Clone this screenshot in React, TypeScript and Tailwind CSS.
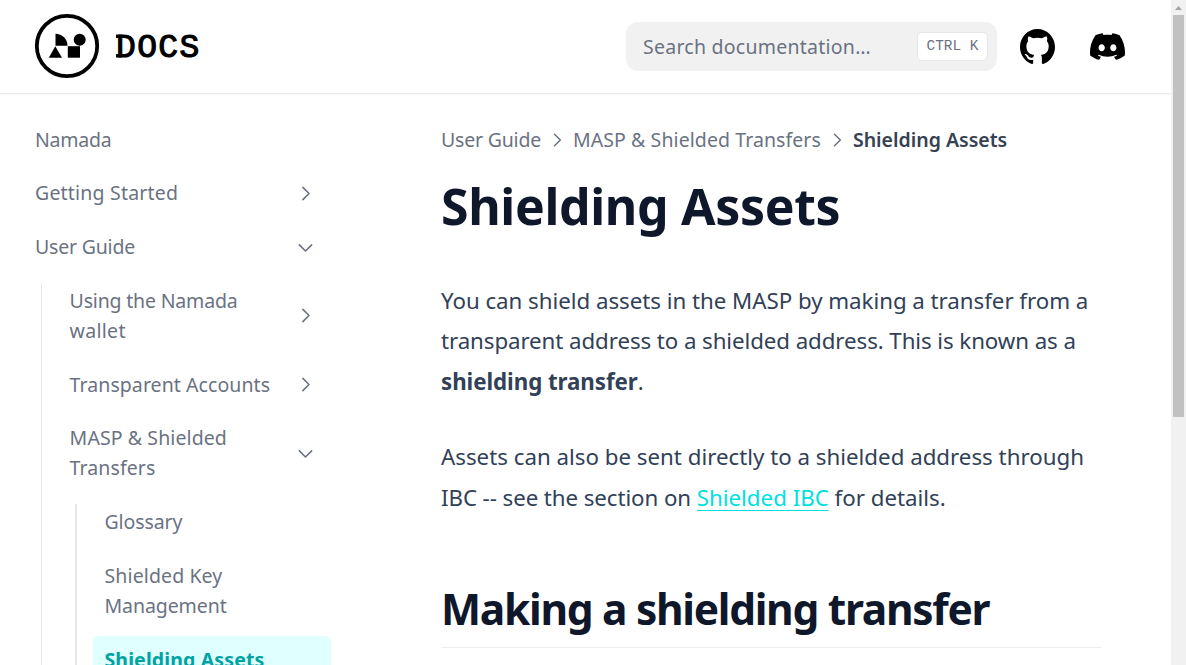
import type { ReactNode } from 'react';
import { SiDiscord } from 'react-icons/si';

function Chevron({ className = '' }: { className?: string }) {
  return (
    <svg viewBox="0 0 24 24" fill="none" stroke="currentColor" strokeWidth="1.8" className={`shrink-0 ${className}`}>
      <path d="M9 5l7 7-7 7" strokeLinecap="round" strokeLinejoin="round" />
    </svg>
  );
}

function GitHubIcon() {
  return (
    <svg viewBox="3 3 18 18" fill="currentColor" className="size-[35px]">
      <path d="M12 3C7.0275 3 3 7.12937 3 12.2276C3 16.3109 5.57625 19.7597 9.15374 20.9824C9.60374 21.0631 9.77249 20.7863 9.77249 20.5441C9.77249 20.3249 9.76125 19.5982 9.76125 18.8254C7.5 19.2522 6.915 18.2602 6.735 17.7412C6.63375 17.4759 6.19499 16.6569 5.8125 16.4378C5.4975 16.2647 5.0475 15.838 5.80124 15.8264C6.51 15.8149 7.01625 16.4954 7.185 16.7722C7.99499 18.1679 9.28875 17.7758 9.80625 17.5335C9.885 16.9337 10.1212 16.53 10.38 16.2993C8.3775 16.0687 6.285 15.2728 6.285 11.7432C6.285 10.7397 6.63375 9.9092 7.20749 9.26326C7.1175 9.03257 6.8025 8.08674 7.2975 6.81794C7.2975 6.81794 8.05125 6.57571 9.77249 7.76377C10.4925 7.55615 11.2575 7.45234 12.0225 7.45234C12.7875 7.45234 13.5525 7.55615 14.2725 7.76377C15.9937 6.56418 16.7475 6.81794 16.7475 6.81794C17.2424 8.08674 16.9275 9.03257 16.8375 9.26326C17.4113 9.9092 17.76 10.7281 17.76 11.7432C17.76 15.2843 15.6563 16.0687 13.6537 16.2993C13.98 16.5877 14.2613 17.1414 14.2613 18.0065C14.2613 19.2407 14.25 20.2326 14.25 20.5441C14.25 20.7863 14.4188 21.0746 14.8688 20.9824C16.6554 20.364 18.2079 19.1866 19.3078 17.6162C20.4077 16.0457 20.9995 14.1611 21 12.2276C21 7.12937 16.9725 3 12 3Z" />
    </svg>
  );
}

function Logo() {
  return (
    <svg viewBox="0 0 170 66" className="mb-[1px] h-[66px] w-[170px]" fill="#000">
      <circle cx="33" cy="33" r="30.2" fill="none" stroke="#000" strokeWidth="3.8" />
      <path d="M21.5 20.7A12 12 0 0 1 33.5 32.7H21.5Z" />
      <circle cx="45.7" cy="26.7" r="6" />
      <path d="M14.8 44.7L21.3 33.2L28 44.7Z" />
      <rect x="33.8" y="33.2" width="12.2" height="11.5" />
      <text
        y="43.9"
        x="81.9 103.2 124.2 145.4"
        stroke="#000"
        strokeWidth="1.1"
        className="font-['Liberation_Mono',monospace] text-[33px]"
      >
        DOCS
      </text>
      <rect x="82" y="21.6" width="6" height="3.4" />
      <rect x="82" y="41.1" width="6" height="3.4" />
    </svg>
  );
}

function Item({ children, open, active }: { children: ReactNode; open?: boolean; active?: boolean }) {
  return (
    <div
      className={`flex items-center justify-between rounded-md py-[8.64px] pr-[11.5px] pl-[11.5px] ${
        active ? 'bg-[#e0ffff] font-bold tracking-[0.13px] text-[#00a3a3]' : 'text-gray-500'
      }`}
    >
      <div>{children}</div>
      {open !== undefined && <Chevron className={`mr-[3.5px] size-[21px] ${open ? 'rotate-90' : ''}`} />}
    </div>
  );
}

function Header() {
  return (
    <header className="flex h-[93px] shrink-0 items-center pr-[46px] pl-[34px] shadow-[0_1px_0_rgba(0,0,0,0.06),0_2px_2px_rgba(0,0,0,0.03)]">
      <Logo />
      <div className="ml-auto flex h-[49px] w-[371px] items-center justify-between rounded-xl bg-[#f1f1f1] pr-[9px] pl-[17px] text-[19.5px] text-gray-500">
        <span className="tracking-[0.25px]">Search documentation…</span>
        <kbd className="flex h-[29px] w-[71px] items-center justify-center rounded-[5px] border border-gray-200 bg-white font-['Liberation_Mono',monospace] text-[14.4px] whitespace-pre">
          CTRL K
        </kbd>
      </div>
      <div className="ml-[23px] flex gap-[35px] text-black">
        <GitHubIcon />
        <SiDiscord className="size-[35px]" />
      </div>
    </header>
  );
}

function Sidebar() {
  return (
    <aside className="w-[331px] shrink-0 pt-[23px] pl-[23.5px] text-[19.5px] leading-[30.24px]">
      <div className="flex flex-col gap-[6.2px]">
        <Item><span className="tracking-[-0.25px]">Namada</span></Item>
        <Item open={false}><span className="tracking-[0.2px]">Getting Started</span></Item>
        <Item open><span className="tracking-[-0.2px]">User Guide</span></Item>
        <div className="relative flex flex-col gap-[6.2px] pl-[34.6px] before:absolute before:top-[6px] before:bottom-0 before:left-[17.5px] before:w-px before:bg-gray-200">
          <Item open={false}><span className="tracking-[-0.18px]">Using the Namada</span><br /><span className="tracking-[0.3px]">wallet</span></Item>
          <Item open={false}><span className="tracking-[0.07px]">Transparent Accounts</span></Item>
          <Item open><span className="tracking-[0.1px]">MASP &amp; Shielded<br />Transfers</span></Item>
          <div className="relative flex flex-col gap-[6.2px] pl-[34.9px] before:absolute before:top-[5.5px] before:bottom-0 before:left-[16.9px] before:w-[2px] before:bg-gray-200">
            <Item><span className="tracking-[-0.1px]">Glossary</span></Item>
            <Item><span className="tracking-[0.12px]">Shielded Key</span><br /><span className="tracking-[-0.08px]">Management</span></Item>
            <Item active>Shielding Assets</Item>
          </div>
        </div>
      </div>
    </aside>
  );
}

function Article() {
  return (
    <main className="ml-[110px] w-[660px] pt-[32px] text-[22.3px] leading-[40.32px] text-slate-700">
      <nav className="flex items-center text-[19.5px] leading-[30px] whitespace-nowrap text-gray-500">
        <span className="tracking-[-0.2px]">User Guide</span>
        <Chevron className="mx-[6px] size-[20px]" />
        <span className="tracking-[0.08px]">MASP &amp; Shielded Transfers</span>
        <Chevron className="mx-[6px] size-[20px]" />
        <span className="font-semibold text-gray-700">Shielding Assets</span>
      </nav>
      <h1 className="mt-[21px] text-[50px] leading-[60px] font-bold tracking-[-0.35px] whitespace-nowrap text-slate-900">
        Shielding Assets
      </h1>
      <p className="mt-[45px] whitespace-nowrap">
        <span className="tracking-[-0.03px]">You can shield assets in the MASP by making a transfer from a</span><br />
        <span className="tracking-[-0.08px]">transparent address to a shielded address. This is known as a</span><br />
        <strong className="font-bold tracking-[-0.05px]">shielding transfer</strong>.
      </p>
      <p className="mt-[35.5px] whitespace-nowrap">
        Assets can also be sent directly to a shielded address through<br />
        <span className="tracking-[-0.08px]">IBC -- see the section on </span>
        <a className="text-[#00e0e0] underline decoration-1 underline-offset-[4px]">Shielded IBC</a> for details.
      </p>
      <h2 className="mt-[65px] border-b border-neutral-200/70 pb-[12px] text-[42.5px] leading-[52px] font-bold tracking-[-1.3px] whitespace-nowrap text-slate-900">
        Making a shielding transfer
      </h2>
    </main>
  );
}

export default function App() {
  return (
    <div className="flex h-[665px] w-[1186px] overflow-hidden bg-white font-['Noto_Sans',sans-serif]">
      <div className="flex w-[1171px] flex-col overflow-hidden">
        <Header />
        <div className="flex min-h-0 flex-1 overflow-hidden">
          <Sidebar />
          <Article />
        </div>
      </div>
      <div className="flex w-[15px] flex-col items-center bg-[#f1f1f1]">
        <svg viewBox="0 0 15 15" className="size-[15px]" fill="#a3a3a3">
          <path d="M4 10L7.5 6L11 10Z" />
        </svg>
        <div className="h-[402px] w-[11px] bg-[#c1c1c1]" />
      </div>
    </div>
  );
}
